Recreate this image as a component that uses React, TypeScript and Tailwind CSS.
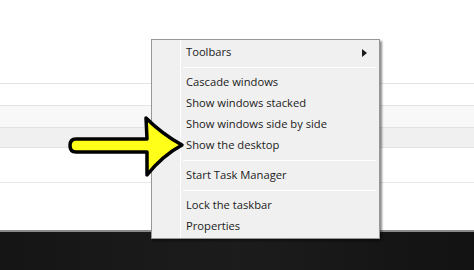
const items: (string | null)[] = [
	"Toolbars",
	null,
	"Cascade windows",
	"Show windows stacked",
	"Show windows side by side",
	"Show the desktop",
	null,
	"Start Task Manager",
	null,
	"Lock the taskbar",
	"Properties",
];

const Separator = () => (
	<div className="h-[9px] flex items-center pl-[31px] pr-[3px]">
		<div className="h-px w-full bg-[#e0e0e0] border-b border-white" />
	</div>
);

const Row = ({ label }: { label: string }) => (
	<div className="h-[21px] flex items-center pl-[34px] pr-[12px] text-[11.2px] text-[#1b1b1b]">
		<span className="flex-1">{label}</span>
		{label === "Toolbars" && (
			<svg width="5" height="8" viewBox="0 0 5 8">
				<path d="M0 0 L5 4 L0 8 Z" fill="#1b1b1b" />
			</svg>
		)}
	</div>
);

const Arrow = () => (
	<svg className="absolute left-0 top-0 pointer-events-none" width="474" height="270" viewBox="0 0 474 270">
		<path
			d="M76 139 L147 139 L146 118 Q162 134 182 145 Q162 156 147 175 L147 152 L76 152 Q70 152 70 145.5 Q70 139 76 139 Z"
			fill="#ffff1a"
			stroke="#000"
			strokeWidth="3.5"
			strokeLinejoin="round"
		/>
	</svg>
);

export default function App() {
	return (
		<div className="relative w-[474px] h-[270px] overflow-hidden bg-white" style={{ fontFamily: '"Open Sans", "Noto Sans", sans-serif' }}>
			{/* window rows behind the menu */}
			<div className="flex flex-col">
				<div className="h-[83px]" />
				<div className="h-[22px] border-t border-[#e3e3e3]" />
				<div className="h-[22px] border-t border-[#e3e3e3] bg-[#f8f8f8]" />
				<div className="h-[20px] border-t border-[#e3e3e3] bg-[#f0f0f0]" />
				<div className="h-[35px] border-t border-[#e3e3e3]" />
				<div className="h-[48px] border-t border-[#e6e6e6]" />
				<div className="h-[40px] border-t-2 border-[#8a8a8a] bg-gradient-to-r from-[#151515] via-[#1c1c1c] to-[#121212]" />
			</div>

			<div className="absolute left-[151px] top-[39px] w-[229px] border border-[#979797] bg-[#f0f0f0] shadow-[2px_2px_2px_rgba(0,0,0,0.45)] pt-[2px] pb-[1px]">
				<div className="absolute left-[28px] top-0 bottom-0 w-px bg-[#e2e2e2] border-r border-white" />
				<div className="relative">
					{items.map((it, i) => (it ? <Row key={i} label={it} /> : <Separator key={i} />))}
				</div>
			</div>

			<Arrow />
		</div>
	);
}
